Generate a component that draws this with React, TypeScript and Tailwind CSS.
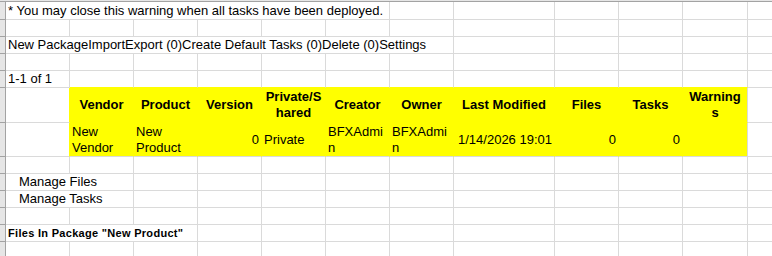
const line = "border-[#dadada]";
const yellow = "bg-[#ffff00]";

// widths: row header strip, A..K, L fills the rest
const sheet =
  "grid grid-cols-[6px_64px_64px_64px_64px_64px_64px_64px_101px_64px_64px_65px_1fr] grid-rows-[18px_17px_17px_17px_17px_35px_34px_17px_17px_17px_17px_17px_17px_17px]";

// column indexes 1..11 = A..K, 12 = L
const Blank = ({ last = false, extra = "" }: { last?: boolean; extra?: string }) => (
  <div className={`border-b ${last ? "" : "border-r"} ${line} ${extra}`} />
);

const RowHead = () => <div className="bg-[#e6e6e6] border-r border-b border-[#a3a3a3]" />;

const blanksFrom = (from: number, key: string) =>
  Array.from({ length: 13 - from }, (_, i) => <Blank key={key + i} last={from + i === 12} />);

const headers = [
  "Vendor",
  "Product",
  "Version",
  <>Private/S<br />hared</>,
  "Creator",
  "Owner",
  "Last Modified",
  "Files",
  "Tasks",
  <>Warning<br />s</>,
];

const values: { text: React.ReactNode; right?: boolean }[] = [
  { text: <>New<br />Vendor</> },
  { text: <>New<br />Product</> },
  { text: "0", right: true },
  { text: "Private" },
  { text: <>BFXAdmi<br />n</> },
  { text: <>BFXAdmi<br />n</> },
  { text: "1/14/2026 19:01", right: true },
  { text: "0", right: true },
  { text: "0", right: true },
  { text: "" },
];

export default function App() {
  return (
    <div className="w-[772px] h-[256px] overflow-hidden bg-white text-black text-[13px] font-['Liberation_Sans',Arial,sans-serif]">
      <div className="h-[2px] bg-[#e6e6e6] border-b border-[#a3a3a3]" />
      <div className={sheet}>
        {/* row 1 - warning */}
        <RowHead />
        <div className={`col-span-6 border-r border-b ${line} flex items-center px-[2px] whitespace-nowrap`}>
          * You may close this warning when all tasks have been deployed.
        </div>
        {blanksFrom(7, "r1")}

        {/* row 2 */}
        <RowHead />
        {blanksFrom(1, "r2")}

        {/* row 3 - actions */}
        <RowHead />
        <div className={`col-span-7 border-r border-b ${line} flex items-center px-[2px] whitespace-nowrap`}>
          New PackageImportExport (0)Create Default Tasks (0)Delete (0)Settings
        </div>
        {blanksFrom(8, "r3")}

        {/* row 4 */}
        <RowHead />
        {blanksFrom(1, "r4")}

        {/* row 5 - paging */}
        <RowHead />
        <div className={`border-r border-b ${line} flex items-center px-[2px] whitespace-nowrap`}>1-1 of 1</div>
        {headers.map((_, i) => (
          <Blank key={"r5" + i} extra="border-b-[#ffff00]" />
        ))}
        <Blank last />

        {/* header row */}
        <RowHead />
        <Blank extra="border-r-[#ffff00]" />
        {headers.map((h, i) => (
          <div
            key={"h" + i}
            className={`${yellow} border-b border-r border-b-[#ffff00] ${
              i === 9 ? "border-r-[#dadada]" : "border-r-[#ffff00]"
            } flex items-center justify-center text-center font-bold leading-[16px]`}
          >
            <span>{h}</span>
          </div>
        ))}
        <Blank last />

        {/* data row */}
        <RowHead />
        <Blank extra="border-r-[#ffff00]" />
        {values.map((v, i) => (
          <div
            key={"v" + i}
            className={`${yellow} border-b border-r border-b-[#dadada] ${
              i === 9 ? "border-r-[#dadada]" : "border-r-[#ffff00]"
            } flex items-center px-[2px] leading-[16px] whitespace-nowrap ${v.right ? "justify-end" : ""}`}
          >
            <span>{v.text}</span>
          </div>
        ))}
        <Blank last />

        {/* row 8 */}
        <RowHead />
        {blanksFrom(1, "r8")}

        {/* manage links */}
        <RowHead />
        <div className={`col-span-2 border-r border-b ${line} flex items-center pl-[13px] whitespace-nowrap`}>Manage Files</div>
        {blanksFrom(3, "r9")}
        <RowHead />
        <div className={`col-span-2 border-r border-b ${line} flex items-center pl-[13px] whitespace-nowrap`}>Manage Tasks</div>
        {blanksFrom(3, "r10")}

        {/* row 11 */}
        <RowHead />
        {blanksFrom(1, "r11")}

        {/* files section title */}
        <RowHead />
        <div className={`col-span-3 border-r border-b ${line} flex items-center px-[2px] whitespace-nowrap text-[11px] tracking-[0.3px] font-bold`}>
          Files In Package "New Product"
        </div>
        {blanksFrom(4, "r12")}

        <RowHead />
        {blanksFrom(1, "r13")}
        <RowHead />
        {blanksFrom(1, "r14")}
      </div>
    </div>
  );
}
